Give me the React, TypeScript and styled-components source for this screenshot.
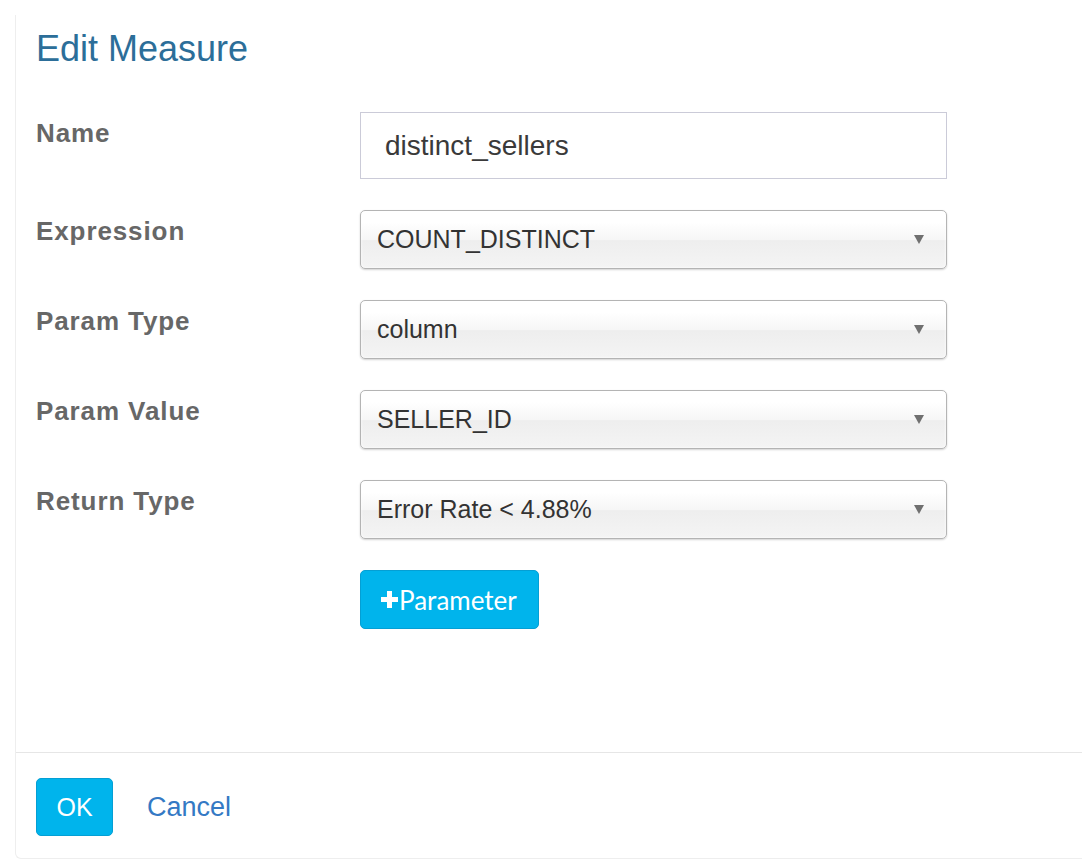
import React from "react";
import styled, { createGlobalStyle } from "styled-components";

const GlobalStyle = createGlobalStyle`
  html, body {
    margin: 0;
    padding: 0;
    background: #ffffff;
    overflow: hidden;
  }
  body {
    font-family: "Liberation Sans", Arial, Helvetica, sans-serif;
  }
  * { box-sizing: border-box; }
`;

const Page = styled.div`
  width: 1082px;
  height: 860px;
  padding: 15px 0 0 15px;
`;

const Modal = styled.div`
  height: 844px;
  background: #ffffff;
  border: 1px solid #eeeeee;
  border-top: none;
  border-right: none;
  border-radius: 0 0 0 6px;
  display: flex;
  flex-direction: column;
`;

const Header = styled.div`
  padding: 14px 20px 0;
`;

const Title = styled.h4`
  margin: 0;
  font-size: 36px;
  line-height: 40px;
  font-weight: normal;
  color: #2c6e99;
`;

const Body = styled.div`
  flex: 1;
  padding: 43px 20px 0;
`;

const Form = styled.div`
  display: grid;
  grid-template-columns: 324px 587px;
  row-gap: 31px;
`;

const Label = styled.label`
  padding-top: 6px;
  font-size: 26px;
  line-height: 30px;
  font-weight: bold;
  letter-spacing: 0.9px;
  color: #676767;
`;

const TextInput = styled.div`
  height: 67px;
  border: 1px solid #cbcbd8;
  padding: 0 24px;
  display: flex;
  align-items: center;
  font-size: 28px;
  color: #3a3a3a;
`;

const Select = styled.div`
  height: 59px;
  border: 1px solid #b4b4b4;
  border-radius: 5px;
  background: linear-gradient(#ffffff 20%, #f6f6f6 50%, #eeeeee 52%, #f4f4f4 100%);
  box-shadow: 0 0 3px #ffffff inset, 0 1px 2px rgba(0, 0, 0, 0.18);
  padding: 0 22px 0 16px;
  display: flex;
  align-items: center;
  justify-content: space-between;
  font-size: 25px;
  color: #333333;
`;

const Arrow = styled.span`
  width: 0;
  height: 0;
  border-left: 5px solid transparent;
  border-right: 5px solid transparent;
  border-top: 9px solid #707070;
`;

const Spacer = styled.div``;

const PrimaryButton = styled.button<{ $wide?: boolean }>`
  height: ${(p) => (p.$wide ? "59px" : "58px")};
  padding: 0 20px;
  background: #00b4ec;
  border: 1px solid #049fd4;
  border-radius: 5px;
  color: #ffffff;
  display: inline-flex;
  align-items: center;
  gap: 1px;
  cursor: pointer;
  font-family: ${(p) =>
    p.$wide ? `Lato, "Open Sans", sans-serif` : `"Liberation Sans", Arial, sans-serif`};
  font-size: ${(p) => (p.$wide ? "26px" : "25px")};
`;

const AddButton = styled(PrimaryButton)`
  width: 179px;
  justify-self: start;
`;

const Footer = styled.div`
  border-top: 1px solid #e6e6e6;
  padding: 25px 20px 22px;
  display: flex;
  align-items: center;
  gap: 34px;
`;

const OkButton = styled(PrimaryButton)`
  width: 77px;
  justify-content: center;
`;

const CancelLink = styled.a`
  font-size: 27px;
  color: #3479c4;
  text-decoration: none;
  cursor: pointer;
`;

const PlusIcon = () => (
  <svg width="17" height="17" viewBox="0 0 17 17" aria-hidden="true">
    <polygon
      fill="#ffffff"
      points="6,0 11,0 11,6 17,6 17,11 11,11 11,17 6,17 6,11 0,11 0,6 6,6"
    />
  </svg>
);

const selects = [
  { label: "Expression", value: "COUNT_DISTINCT" },
  { label: "Param Type", value: "column" },
  { label: "Param Value", value: "SELLER_ID" },
  { label: "Return Type", value: "Error Rate < 4.88%" },
];

export default function App() {
  return (
    <>
      <GlobalStyle />
      <Page>
        <Modal>
          <Header>
            <Title>Edit Measure</Title>
          </Header>
          <Body>
            <Form>
              <Label>Name</Label>
              <TextInput>distinct_sellers</TextInput>
              {selects.map((s) => (
                <React.Fragment key={s.label}>
                  <Label>{s.label}</Label>
                  <Select>
                    <span>{s.value}</span>
                    <Arrow />
                  </Select>
                </React.Fragment>
              ))}
              <Spacer />
              <AddButton $wide>
                <PlusIcon />
                Parameter
              </AddButton>
            </Form>
          </Body>
          <Footer>
            <OkButton>OK</OkButton>
            <CancelLink>Cancel</CancelLink>
          </Footer>
        </Modal>
      </Page>
    </>
  );
}
